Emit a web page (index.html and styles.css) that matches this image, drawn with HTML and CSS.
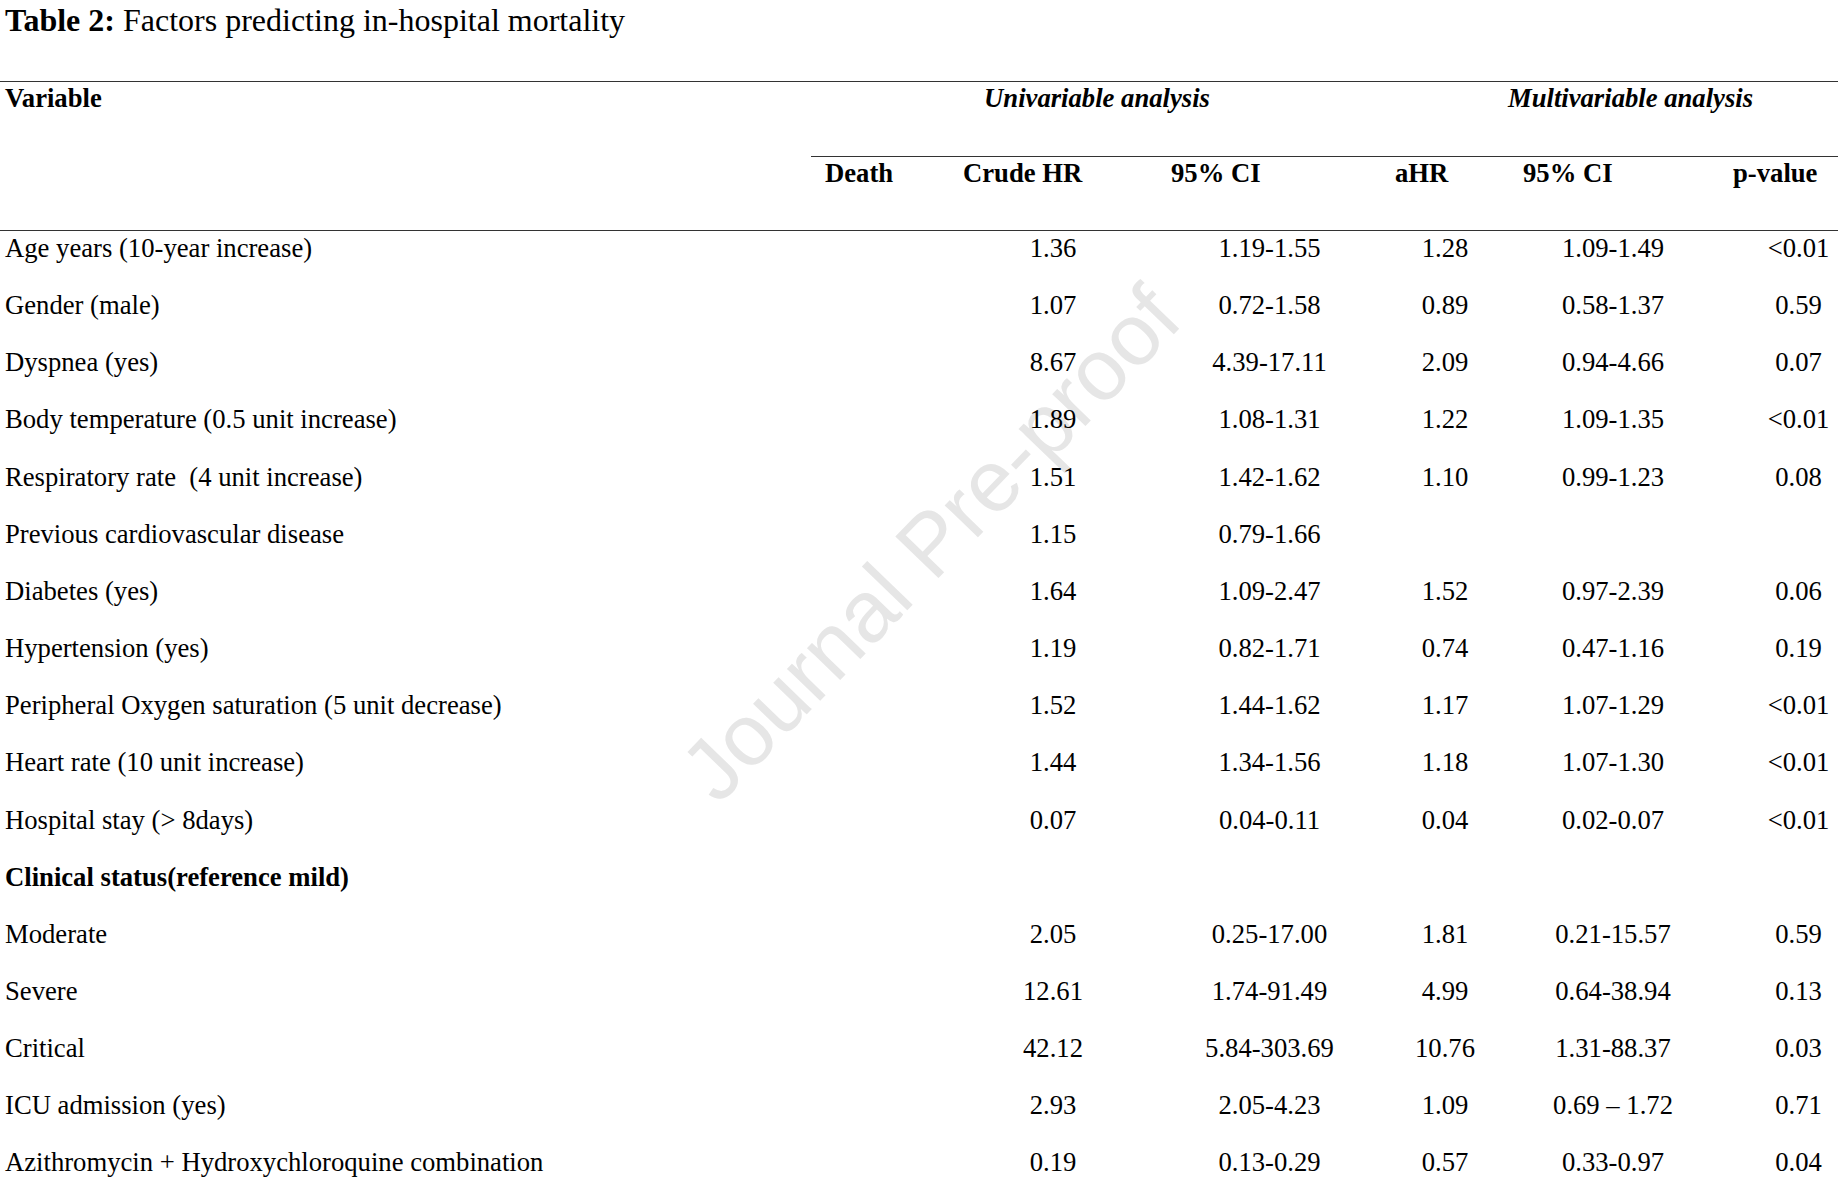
FILE: index.html
```html
<!DOCTYPE html>
<html lang="en">
<head>
<meta charset="utf-8">
<title>Table 2: Factors predicting in-hospital mortality</title>
<link rel="stylesheet" href="styles.css">
</head>
<body>
<div class="watermark">Journal Pre-proof</div>
<h1 class="caption"><b>Table 2:</b> Factors predicting in-hospital mortality</h1>
<table class="results">
  <colgroup>
    <col class="c-var"><col class="c-death"><col class="c-crude"><col class="c-ci1"><col class="c-ahr"><col class="c-ci2"><col class="c-p">
  </colgroup>
  <thead>
    <tr class="group-row">
      <th rowspan="2" class="h-var">Variable</th>
      <th colspan="3" class="h-group h-uni">Univariable analysis</th>
      <th colspan="3" class="h-group h-multi">Multivariable analysis</th>
    </tr>
    <tr class="sub-row">
      <th class="h-death">Death</th>
      <th class="h-crude">Crude HR</th>
      <th class="h-ci1">95% CI</th>
      <th class="h-ahr">aHR</th>
      <th class="h-ci2">95% CI</th>
      <th class="h-p">p-value</th>
    </tr>
  </thead>
  <tbody>
    <tr><td>Age years (10-year increase)</td><td></td><td class="num">1.36</td><td class="num">1.19-1.55</td><td class="num">1.28</td><td class="num">1.09-1.49</td><td class="num p">&lt;0.01</td></tr>
    <tr><td>Gender (male)</td><td></td><td class="num">1.07</td><td class="num">0.72-1.58</td><td class="num">0.89</td><td class="num">0.58-1.37</td><td class="num p">0.59</td></tr>
    <tr><td>Dyspnea (yes)</td><td></td><td class="num">8.67</td><td class="num">4.39-17.11</td><td class="num">2.09</td><td class="num">0.94-4.66</td><td class="num p">0.07</td></tr>
    <tr><td>Body temperature (0.5 unit increase)</td><td></td><td class="num">1.89</td><td class="num">1.08-1.31</td><td class="num">1.22</td><td class="num">1.09-1.35</td><td class="num p">&lt;0.01</td></tr>
    <tr><td>Respiratory rate &nbsp;(4 unit increase)</td><td></td><td class="num">1.51</td><td class="num">1.42-1.62</td><td class="num">1.10</td><td class="num">0.99-1.23</td><td class="num p">0.08</td></tr>
    <tr><td>Previous cardiovascular disease</td><td></td><td class="num">1.15</td><td class="num">0.79-1.66</td><td class="num"></td><td class="num"></td><td class="num p"></td></tr>
    <tr><td>Diabetes (yes)</td><td></td><td class="num">1.64</td><td class="num">1.09-2.47</td><td class="num">1.52</td><td class="num">0.97-2.39</td><td class="num p">0.06</td></tr>
    <tr><td>Hypertension (yes)</td><td></td><td class="num">1.19</td><td class="num">0.82-1.71</td><td class="num">0.74</td><td class="num">0.47-1.16</td><td class="num p">0.19</td></tr>
    <tr><td>Peripheral Oxygen saturation (5 unit decrease)</td><td></td><td class="num">1.52</td><td class="num">1.44-1.62</td><td class="num">1.17</td><td class="num">1.07-1.29</td><td class="num p">&lt;0.01</td></tr>
    <tr><td>Heart rate (10 unit increase)</td><td></td><td class="num">1.44</td><td class="num">1.34-1.56</td><td class="num">1.18</td><td class="num">1.07-1.30</td><td class="num p">&lt;0.01</td></tr>
    <tr><td>Hospital stay (&gt; 8days)</td><td></td><td class="num">0.07</td><td class="num">0.04-0.11</td><td class="num">0.04</td><td class="num">0.02-0.07</td><td class="num p">&lt;0.01</td></tr>
    <tr class="section"><td>Clinical status(reference mild)</td><td></td><td></td><td></td><td></td><td></td><td></td></tr>
    <tr><td>Moderate</td><td></td><td class="num">2.05</td><td class="num">0.25-17.00</td><td class="num">1.81</td><td class="num">0.21-15.57</td><td class="num p">0.59</td></tr>
    <tr><td>Severe</td><td></td><td class="num">12.61</td><td class="num">1.74-91.49</td><td class="num">4.99</td><td class="num">0.64-38.94</td><td class="num p">0.13</td></tr>
    <tr><td>Critical</td><td></td><td class="num">42.12</td><td class="num">5.84-303.69</td><td class="num">10.76</td><td class="num">1.31-88.37</td><td class="num p">0.03</td></tr>
    <tr><td>ICU admission (yes)</td><td></td><td class="num">2.93</td><td class="num">2.05-4.23</td><td class="num">1.09</td><td class="num">0.69 – 1.72</td><td class="num p">0.71</td></tr>
    <tr><td>Azithromycin + Hydroxychloroquine combination</td><td></td><td class="num">0.19</td><td class="num">0.13-0.29</td><td class="num">0.57</td><td class="num">0.33-0.97</td><td class="num p">0.04</td></tr>
  </tbody>
</table>
</body>
</html>
```
FILE: styles.css
```css
html {
  background: #ffffff;
}

html, body {
  margin: 0;
  padding: 0;
}

body {
  position: relative;
  font-family: "Liberation Serif", "Times New Roman", serif;
  color: #000;
  width: 1838px;
}

.caption {
  margin: 0;
  padding: 1.5px 0 0 5px;
  font-size: 32px;
  font-weight: normal;
  line-height: normal;
  height: 81px;
  box-sizing: border-box;
}

.caption b {
  font-weight: bold;
}

.results {
  width: 1838px;
  table-layout: fixed;
  border-collapse: separate;
  border-spacing: 0;
  border-top: 1px solid #333;
  font-size: 26.67px;
  line-height: 30.16px;
}

.c-var { width: 811px; }
.c-death { width: 129px; }
.c-crude { width: 226px; }
.c-ci1 { width: 207px; }
.c-ahr { width: 144px; }
.c-ci2 { width: 192px; }
.c-p { width: 129px; }

th, td {
  padding: 0;
  vertical-align: top;
  white-space: nowrap;
}

th {
  font-weight: bold;
  text-align: left;
}

.group-row th {
  padding-top: 1.4px;
  padding-bottom: 42.44px;
}

.h-var {
  padding-left: 5px;
  border-bottom: 1px solid #333;
}

.h-group {
  font-style: italic;
  text-align: center;
  border-bottom: 1px solid #333;
}

.h-uni { padding-left: 10px; }
.h-multi { padding-left: 50px; }

.sub-row th {
  padding-top: 1.4px;
  padding-bottom: 41.44px;
  border-bottom: 1px solid #333;
}

.h-death { padding-left: 14px; }
.h-crude { padding-left: 23px; }
.h-ci1 { padding-left: 5px; }
.h-ahr { padding-left: 22px; }
.h-ci2 { padding-left: 6px; }
.h-p { padding-left: 24px; }

tbody td {
  padding-top: 2px;
  padding-bottom: 25px;
}

tbody td:first-child {
  padding-left: 5px;
}

tbody tr:last-child td {
  padding-bottom: 8px;
}

.num {
  text-align: center;
}

.num.p {
  padding-left: 50px;
}

.section td:first-child {
  font-weight: bold;
}

.watermark {
  position: absolute;
  left: 930px;
  top: 543px;
  transform: translate(-50%, -50%) rotate(-46deg);
  font-family: "Liberation Sans", Arial, sans-serif;
  font-size: 87px;
  line-height: 1;
  color: #e6e6e6;
  white-space: nowrap;
  z-index: -1;
}
```
